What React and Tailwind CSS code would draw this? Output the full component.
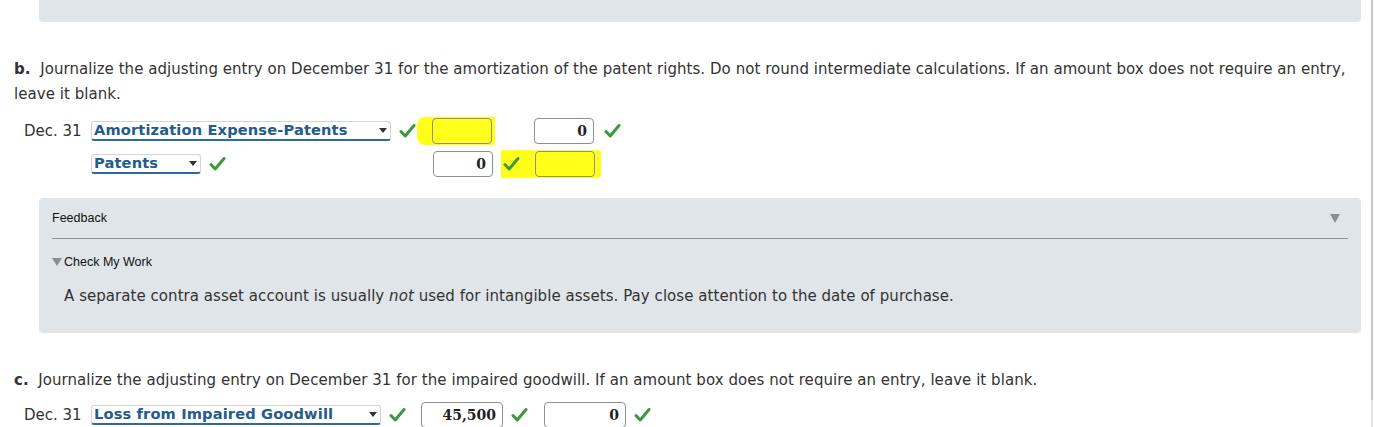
const Check = () => (
  <svg width="17" height="16" viewBox="0 0 17 16" className="shrink-0">
    <path d="M2 8.5 L6.2 13 L15 2.5" fill="none" stroke="#3b9a3b" strokeWidth="3" strokeLinecap="round" strokeLinejoin="round" />
  </svg>
)

const Select = ({ label, width }) => (
  <div
    className={`relative flex items-center h-[20px] rounded-[3px] border border-[#d4d4d4] border-b-2 border-b-[#2d6a9b] bg-white pl-[2px] ${width}`}
  >
    <span className="font-bold text-[14.6px] leading-none text-[#235b8c] tracking-[0.15px]">{label}</span>
    <span className="absolute right-[3px] top-[6px] w-0 h-0 border-l-[4px] border-r-[4px] border-t-[5px] border-l-transparent border-r-transparent border-t-[#333]" />
  </div>
)

const Amount = ({ value, hl, w = 'w-[60px]' }) => (
  <div
    className={`h-[26px] ${w} rounded-[4px] border border-[#8f8f8f] flex items-center justify-end pr-[6px] text-[14px] font-bold text-[#222] ${hl ? 'bg-[#ffff1a]' : 'bg-white'}`}
    style={{ fontFamily: '"DejaVu Serif", serif' }}
  >
    {value}
  </div>
)

export default function App() {
  return (
    <div
      className="relative w-[1374px] h-[427px] overflow-hidden bg-white text-[#333]"
      style={{ fontFamily: '"DejaVu Sans", Verdana, sans-serif' }}
    >
      {/* right edge line */}
      <div className="absolute right-[1px] top-0 h-[400px] w-[2px] bg-[#c8c8c8]" />
      <div className="absolute right-[1px] top-[400px] h-[27px] w-[2px] bg-[#e4e4e4]" />

      <div className="ml-[39px] mr-[13px] h-[22px] bg-[#dfe5e8] rounded-b-[4px]" />

      <div className="px-[14px] pt-[35px] pr-[16px] text-[15px] leading-[25px] tracking-[0.05px]">
        <span className="font-bold">b.</span>&nbsp; Journalize the adjusting entry on December 31 for the amortization of the patent rights. Do not round intermediate calculations. If an amount box does not require an entry, leave it blank.
      </div>

      {/* Entry b */}
      <div className="mt-[11px] flex flex-col gap-[7px]">
        <div className="flex items-center h-[26px]">
          <span className="ml-[24px] w-[67px] text-[15px]">Dec. 31</span>
          <Select label="Amortization Expense-Patents" width="w-[300px]" />
          <span className="ml-[8px] w-[33px] relative z-10"><Check /></span>
          <div className="w-[102px]">
            <div className="w-fit -ml-[15px] pl-[15px] pr-[3px] py-[1px] bg-[#ffff1a] rounded-l-[8px]">
              <Amount hl value="" />
            </div>
          </div>
          <Amount value="0" />
          <span className="ml-[10px]"><Check /></span>
        </div>
        <div className="flex items-center h-[26px]">
          <span className="ml-[91px]">
            <Select label="Patents" width="w-[110px]" />
          </span>
          <span className="ml-[8px]"><Check /></span>
          <div className="ml-[207px] flex items-center">
            <Amount value="0" />
            <div className="ml-[8px] flex items-center bg-[#ffff1a] pl-[2px] pr-[6px] py-[1px] rounded-r-[4px]">
              <span className="mr-[15px]"><Check /></span>
              <Amount hl value="" />
            </div>
          </div>
        </div>
      </div>

      {/* Feedback */}
      <div className="mt-[21px] ml-[39px] mr-[13px] h-[135px] bg-[#dfe5e8] rounded-[4px] px-[13px] pt-[12px]">
        <div className="flex items-center justify-between pr-[8px] h-[16px]" style={{ fontFamily: '"Liberation Sans", Arial, sans-serif' }}>
          <span className="text-[12.5px] text-[#111]">Feedback</span>
          <span className="w-0 h-0 border-l-[5px] border-r-[5px] border-t-[9px] border-l-transparent border-r-transparent border-t-[#8a8f93]" />
        </div>
        <div className="mt-[12px] h-px bg-[#8c9296]" />
        <div className="mt-[14px] flex items-center text-[12.5px] text-[#111]" style={{ fontFamily: '"Liberation Sans", Arial, sans-serif' }}>
          <span className="mr-[2px] w-0 h-0 border-l-[5px] border-r-[5px] border-t-[8px] border-l-transparent border-r-transparent border-t-[#8a8f93]" />
          Check My Work
        </div>
        <div className="mt-[13px] ml-[12px] text-[15px] text-[#333] tracking-[0.05px]">
          A separate contra asset account is usually <i>not</i> used for intangible assets. Pay close attention to the date of purchase.
        </div>
      </div>

      <div className="px-[14px] pt-[35px] text-[15px] leading-[25px] tracking-[0.05px]">
        <span className="font-bold">c.</span>&nbsp; Journalize the adjusting entry on December 31 for the impaired goodwill. If an amount box does not require an entry, leave it blank.
      </div>

      <div className="mt-[9px] flex items-center h-[26px]">
        <span className="ml-[24px] w-[67px] text-[15px]">Dec. 31</span>
        <Select label="Loss from Impaired Goodwill" width="w-[290px]" />
        <span className="ml-[8px] w-[32px]"><Check /></span>
        <Amount value="45,500" w="w-[82px]" />
        <span className="ml-[8px] mr-[16px]"><Check /></span>
        <Amount value="0" w="w-[82px]" />
        <span className="ml-[8px]"><Check /></span>
      </div>
    </div>
  )
}
